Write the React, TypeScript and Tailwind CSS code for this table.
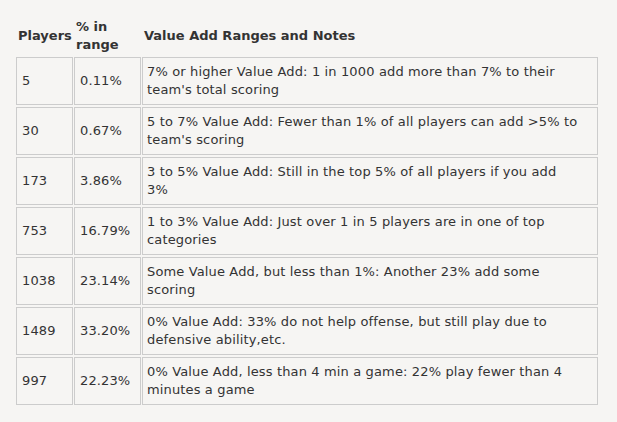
import React from "react";

const rows: [string, string, string, string][] = [
  ["5", "0.11%", "7% or higher Value Add: 1 in 1000 add more than 7% to their", "team's total scoring"],
  ["30", "0.67%", "5 to 7% Value Add: Fewer than 1% of all players can add >5% to", "team's scoring"],
  ["173", "3.86%", "3 to 5% Value Add: Still in the top 5% of all players if you add", "3%"],
  ["753", "16.79%", "1 to 3% Value Add: Just over 1 in 5 players are in one of top", "categories"],
  ["1038", "23.14%", "Some Value Add, but less than 1%: Another 23% add some", "scoring"],
  ["1489", "33.20%", "0% Value Add: 33% do not help offense, but still play due to", "defensive ability,etc."],
  ["997", "22.23%", "0% Value Add, less than 4 min a game: 22% play fewer than 4", "minutes a game"],
];

export default function App() {
  return (
    <div className="w-[617px] h-[422px] bg-[#f6f5f3] text-[#333] pt-[16px] pl-[16px] text-[13px] leading-[18px]" style={{ fontFamily: '"DejaVu Sans", Verdana, sans-serif' }}>
      <div className="grid grid-cols-[57px_67px_456px] gap-x-[1px] gap-y-[2px]">
        <div className="font-bold flex items-center pl-[2px] h-[39px] whitespace-nowrap">Players</div>
        <div className="font-bold flex items-center pl-[2px] h-[39px]">% in<br />range</div>
        <div className="font-bold flex items-center pl-[2px] h-[39px]">Value Add Ranges and Notes</div>
        {rows.map((r) => (
          <React.Fragment key={r[0]}>
            <div className="border border-[#cccccc] h-[48px] flex items-center px-[5px] tracking-[0.12px]">{r[0]}</div>
            <div className="border border-[#cccccc] h-[48px] flex items-center px-[5px] tracking-[0.12px]">{r[1]}</div>
            <div className="border border-[#cccccc] h-[48px] flex items-center px-[4px] tracking-[0.14px] whitespace-nowrap">
              <div>{r[2]}<br />{r[3]}</div>
            </div>
          </React.Fragment>
        ))}
      </div>
    </div>
  );
}
